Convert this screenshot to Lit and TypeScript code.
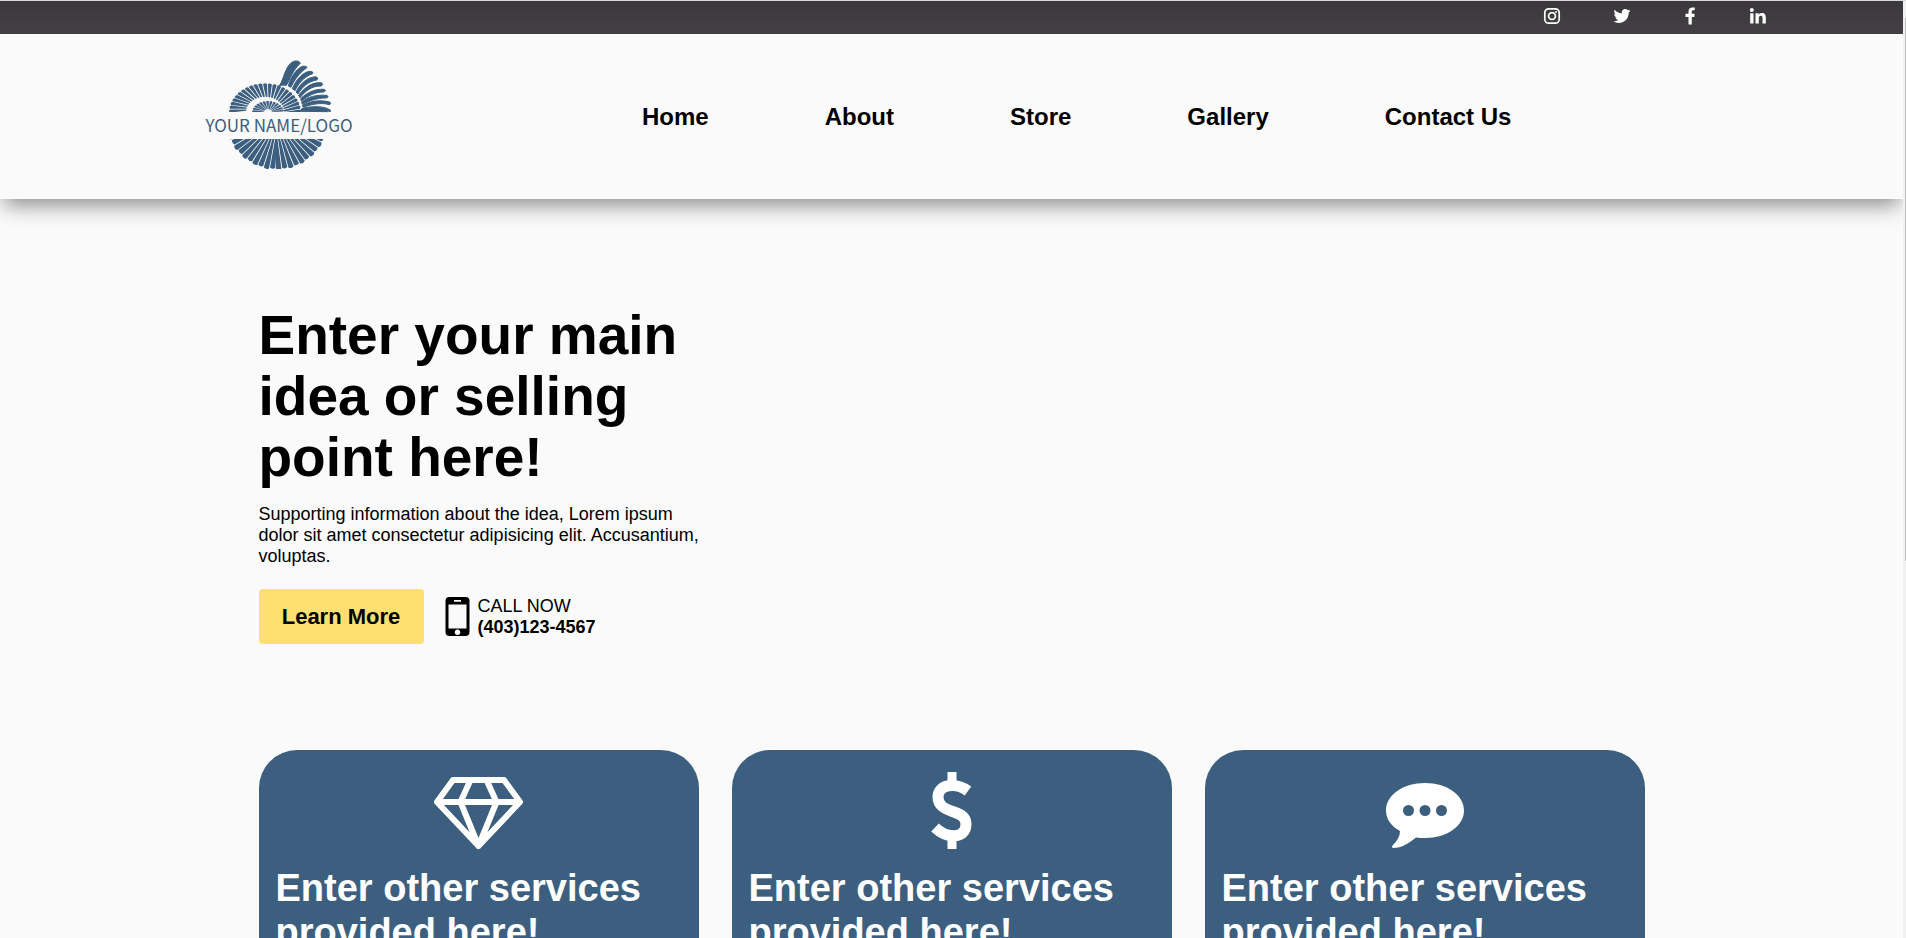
import { LitElement, html, css, svg } from "lit";
import { customElement } from "lit/decorators.js";

const point = (cx: number, cy: number, r: number, deg: number, k = 1) => {
  const a = (deg * Math.PI) / 180;
  return `${(cx + r * Math.cos(a)).toFixed(1)} ${(cy + r * k * Math.sin(a)).toFixed(1)}`;
};

/* One rib of the shell: a slightly slanted wedge with a rounded outer end. */
const rib = (cx: number, cy: number, r0: number, r1: number, deg: number, half: number, slant: number, k = 1) =>
  `M${point(cx, cy, r0, deg + slant - half * 0.8, k)}L${point(cx, cy, r1 - 1, deg - half, k)}` +
  `Q${point(cx, cy, r1 + 1, deg, k)} ${point(cx, cy, r1 - 1, deg + half, k)}` +
  `L${point(cx, cy, r0, deg + slant + half * 0.8, k)}Z`;

const range = (from: number, to: number, step: number) => {
  const list: number[] = [];
  for (let v = from; v <= to; v += step) list.push(v);
  return list;
};

const innerRibs = range(184, 356, 14).map((d) => rib(63, 51, 4, 16, d, 5.5, 6, 0.7)).join("");
const middleRibs = range(182, 358, 8).map((d) => rib(60, 51, 19, 36, d, 3.3, 5, 0.8)).join("");
const lowerRibs = range(18, 166, 7).map((d, i) => rib(72, 57, 16, i % 2 ? 51 : 52, d, 3, d < 90 ? 5 : -4)).join("");

@customElement("app-root")
export class AppRoot extends LitElement {
  static styles = css`
    :host {
      display: grid;
      grid-template-columns: minmax(0, 1fr) 3px;
      height: 100vh;
      box-sizing: border-box;
      border-top: 1px solid #d8dadd;
      background: #fafafa;
      color: #000;
      font-family: "Liberation Sans", Arial, sans-serif;
      font-size: 18px;
      line-height: 21px;
    }
    h1, h2, p, ul { margin: 0; padding: 0; }
    a { color: inherit; text-decoration: none; }
    svg { display: block; }
    .page { overflow: hidden auto; scrollbar-width: none; }
    .track { background: #f1f1f1; padding: 17px 0 0 2px; }
    .thumb { height: 59%; background: #c1c1c1; }
    .social {
      display: flex;
      justify-content: flex-end;
      align-items: center;
      gap: 52px;
      height: 33px;
      box-sizing: border-box;
      padding: 0 136px 3px 0;
      background: linear-gradient(#39373b, #444244);
      color: #fff;
    }
    .header {
      display: flex;
      align-items: center;
      height: 165px;
      padding: 0 205px 4px;
      box-sizing: border-box;
      box-shadow: 0 10px 20px -4px rgba(0, 0, 0, 0.45);
    }
    .logo { flex: 0 0 148px; }
    .logo svg { overflow: visible; }
    .logotext { font-family: "Noto Sans CJK JP", "Liberation Sans", sans-serif; font-size: 17px; }
    .nav { flex: 1; padding: 4px 0 0 289px; }
    .nav ul {
      display: flex;
      gap: 116px;
      list-style: none;
      font-size: 24px;
      line-height: 28px;
      font-weight: 700;
    }
    .hero, .cards { max-width: 1386px; margin: 0 auto; }
    .hero { padding: 106px 0; }
    .copy { width: 448px; }
    h1 { font-size: 55px; line-height: 61px; }
    .copy p { padding: 16px 0 22px; }
    .actions { display: flex; align-items: center; gap: 21px; }
    .learn {
      width: 165px;
      height: 55px;
      border: 0;
      border-radius: 4px;
      background: #fde06f;
      color: #000;
      font: 700 22px "Liberation Sans", Arial, sans-serif;
    }
    .call { display: flex; align-items: center; gap: 8px; }
    .call span, .call strong { display: block; }
    .cards { display: grid; grid-template-columns: repeat(3, 1fr); gap: 33px; padding-bottom: 64px; }
    .card {
      padding: 16px 16px 40px 17px;
      border-radius: 38px;
      background: #3c5f7f;
      color: #fff;
    }
    .card svg { margin: 0 auto 16px; }
    h2 { font-size: 38px; line-height: 44px; }
  `;

  private logo() {
    return svg`<svg width="148" height="108" viewBox="0 0 148 108" role="img" aria-label="Your name/logo">
      <clipPath id="upper"><path d="M0 0h148v51H0z" /></clipPath>
      <clipPath id="lower"><path d="M0 78h148v30H0z" /></clipPath>
      <g fill="#3c5f80">
        <path clip-path="url(#upper)" d="${innerRibs}${middleRibs}" />
        <g transform="translate(10 -5) scale(.3333)" stroke="#3c5f80" stroke-width="3" stroke-linejoin="round">
          <path d="M188 93C206 84 206 30 236 16q16-4 20 6C232 44 226 70 214 88q-12-4-26 5Z" />
          <path d="M220 90C226 66 244 38 262 31q14-2 14 4C252 50 236 76 228 94Z" />
          <path d="M232 98C244 70 262 50 284 46q12 0 9 7C266 62 248 86 240 104Z" />
          <path d="M243 108C254 84 276 64 302 62q10 2 4 10C280 76 262 92 249 114Z" />
          <path d="M251 118C266 98 288 78 318 80q10 4 0 10C290 90 272 104 255 125Z" />
          <path d="M257 128C274 112 296 98 328 100q8 4-2 8C298 108 280 120 259 135Z" />
          <path d="M260 138C280 122 302 116 336 118q8 5-2 8C304 126 286 134 262 145Z" />
          <path d="M262 148C286 136 312 130 344 138q6 4 0 8C314 138 292 146 264 153Z" />
          <path d="M256 166q2-10 12-11c30-4 56-6 78 7v5l-20-6 12 6Z" />
        </g>
        <path clip-path="url(#lower)" d="${lowerRibs}" />
      </g>
      <text class="logotext" x="74" y="71" text-anchor="middle" fill="#3c5f80">YOUR NAME/LOGO</text>
    </svg>`;
  }

  private social() {
    return html`<nav class="social" aria-label="Social">
      <a href="#instagram" aria-label="Instagram"><svg width="18" height="18" viewBox="0 0 18 18" fill="none" stroke="#fff" stroke-width="1.7"><rect x="1.8" y="1.8" width="14.4" height="14.4" rx="4" /><circle cx="9" cy="9" r="3.4" /><circle cx="13" cy="5" r="1" fill="#fff" stroke="none" /></svg></a>
      <a href="#twitter" aria-label="Twitter"><svg width="18" height="18" viewBox="-16 -16 544 544" fill="#fff"><path d="M459 152c0 4 0 9 0 13 0 139-106 299-299 299-59 0-115-17-161-47 8 1 16 1 25 1 49 0 94-17 130-45-46-1-85-31-98-73 7 1 13 2 20 2 9 0 19-1 28-4-48-10-84-52-84-103v-1c14 8 30 13 47 13C39 188 21 156 21 120c0-19 5-37 14-53 52 64 130 105 217 110-2-8-3-16-3-24 0-58 47-105 105-105 30 0 58 13 77 33 24-5 46-13 67-25-8 24-24 45-46 58 21-2 42-8 60-16-14 21-32 39-53 54Z" /></svg></a>
      <a href="#facebook" aria-label="Facebook"><svg width="14" height="18" viewBox="0 0 14 18" fill="#fff"><path d="M5.500 17.500V10H2.500V6.800h3V4.500C5.500 1.800 7 .4 9.400.4c1.100 0 2.300.2 2.300.2v2.700h-1.300C9.200 3.300 8.800 4 8.800 4.800v2h2.900L11.200 10H8.800v7.500Z" /></svg></a>
      <a href="#linkedin" aria-label="LinkedIn"><svg width="18" height="18" viewBox="0 0 18 18" fill="#fff"><circle cx="2.800" cy="3" r="2" /><path d="M1.200 6.200h3.300v10.300H1.200ZM6.500 6.200h3.100v1.500c.6-1 1.700-1.800 3.300-1.800 3.200 0 3.900 2.100 3.900 4.900v5.700h-3.300v-5c0-1.400 0-2.800-1.700-2.800s-2 1.300-2 2.700v5.100H6.500Z" /></svg></a>
    </nav>`;
  }

  private icons = [
    svg`<svg width="90" height="84" viewBox="0 0 90 84" fill="none" stroke="#fff" stroke-width="6" stroke-linejoin="round"><path d="M19 14h51L86 36 44.500 80 3 36ZM3 36h83M36.500 14 26.500 36l18 44 18-44-10-22" /></svg>`,
    svg`<svg width="90" height="84" viewBox="0 0 90 84" fill="none" stroke="#fff"><path d="M45 6v12M45 70v13" stroke-width="9" /><path d="M61 25C49 16 31 18 31 31c0 18 28 11 28 27 0 15-19 15-31 3.500" stroke-width="11" /></svg>`,
    svg`<svg width="90" height="84" viewBox="0 0 90 84"><path fill="#fff" d="M45 17c22 0 39 12 39 27.500S67 72 45 72q-5 0-9-.5C29 77 22 82 13 82q-2-1 0-3 7-7 7-14C11 60 6 53 6 44.500 6 29 23 17 45 17Z" /><g fill="#3c5f7f"><circle cx="28.500" cy="44.500" r="5.500" /><circle cx="45" cy="44.500" r="5.500" /><circle cx="61.500" cy="44.500" r="5.500" /></g></svg>`,
  ];

  render() {
    return html`
      <div class="page">
        ${this.social()}
        <header class="header">
          <a class="logo" href="#home">${this.logo()}</a>
          <nav class="nav" aria-label="Main">
            <ul>
              ${["Home", "About", "Store", "Gallery", "Contact Us"].map(
                (label) => html`<li><a href="#${label.toLowerCase().replace(" ", "-")}">${label}</a></li>`
              )}
            </ul>
          </nav>
        </header>
        <main>
          <section class="hero">
            <div class="copy">
              <h1>Enter your main idea or selling point here!</h1>
              <p>Supporting information about the idea, Lorem ipsum dolor sit amet consectetur adipisicing elit. Accusantium, voluptas.</p>
              <div class="actions">
                <button class="learn" type="button">Learn More</button>
                <a class="call" href="tel:4031234567">
                  <svg width="25" height="40" viewBox="0 0 25 40"><path fill-rule="evenodd" d="M4.500 0h16q4 0 4 4v31q0 4-4 4h-16q-4 0-4-4V4q0-4 4-4ZM3.500 7.500v24h18v-24ZM9 3v1.800h7V3ZM12.500 32.500a2.800 2.800 0 1 0 .01 0Z" /></svg>
                  <span><span>CALL NOW</span><strong>(403)123-4567</strong></span>
                </a>
              </div>
            </div>
          </section>
          <section class="cards">
            ${this.icons.map(
              (icon) => html`<article class="card">${icon}<h2>Enter other services provided here!</h2></article>`
            )}
          </section>
        </main>
      </div>
      <div class="track" aria-hidden="true"><div class="thumb"></div></div>
    `;
  }
}
